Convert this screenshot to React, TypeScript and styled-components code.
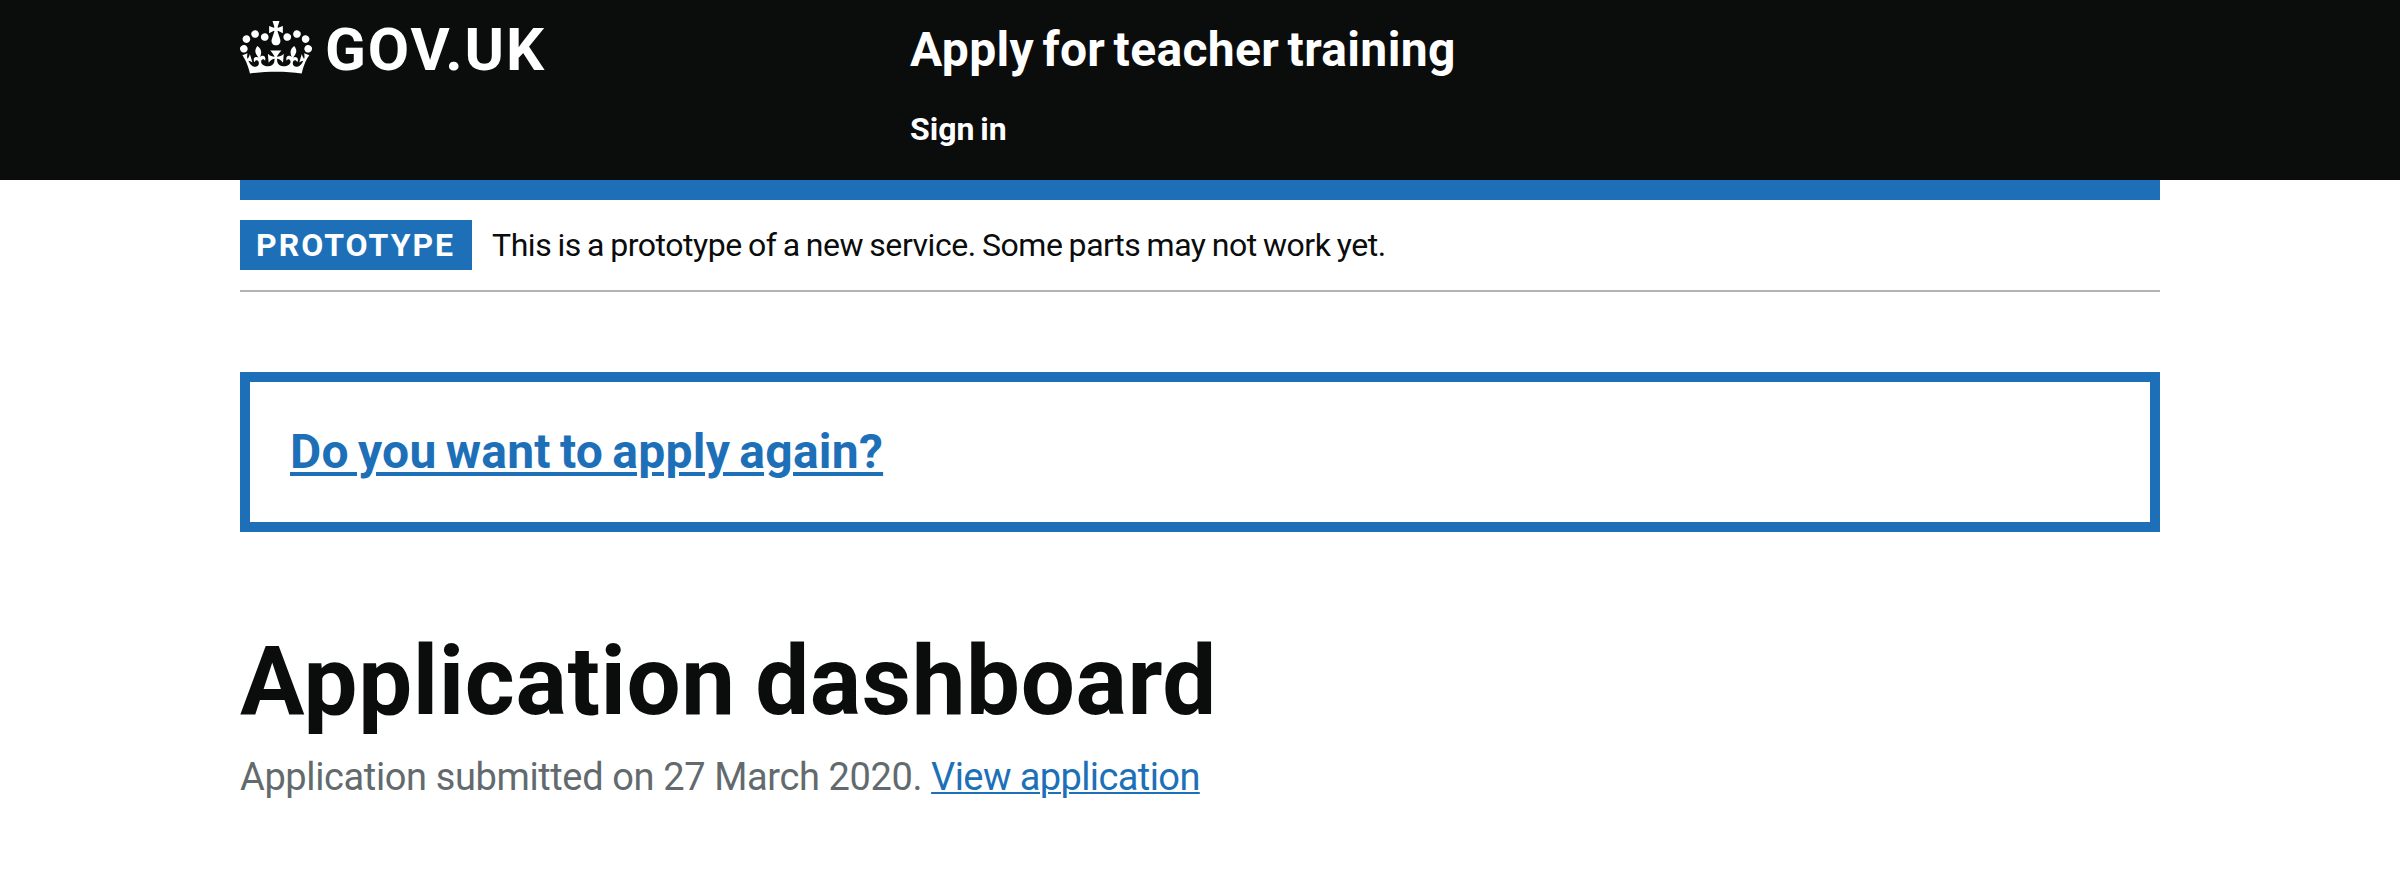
import React from 'react';
import styled, { createGlobalStyle } from 'styled-components';

const color = {
  black: '#0b0c0c',
  blue: '#1d70b8',
  border: '#b1b4b6',
  secondary: '#626a6e',
  white: '#ffffff',
};

const GlobalStyle = createGlobalStyle`
  *, *::before, *::after { box-sizing: border-box; }
  body {
    margin: 0;
    background: ${color.white};
    color: ${color.black};
    font-family: Roboto, "Liberation Sans", sans-serif;
  }
`;

const Container = styled.div`
  width: 1920px;
  margin: 0 auto;
`;

const Header = styled.header`
  height: 180px;
  background: ${color.black};
  color: ${color.white};
`;

const HeaderRow = styled(Container)`
  display: grid;
  grid-template-columns: 670px 1fr;
  align-items: start;
`;

const LogoLink = styled.a`
  display: flex;
  align-items: flex-start;
  gap: 13px;
  padding-top: 21px;
  color: inherit;
  text-decoration: none;
`;

const Crown = styled.svg`
  display: block;
  width: 72px;
  height: 53px;
  fill: currentColor;
`;

const LogoText = styled.span`
  font-size: 60px;
  font-weight: 700;
  line-height: 58px;
  letter-spacing: 1.9px;
`;

const HeaderContent = styled.div`
  display: flex;
  flex-direction: column;
  align-items: flex-start;
  padding-top: 21px;
`;

const ServiceName = styled.a`
  color: inherit;
  font-size: 48px;
  font-weight: 700;
  line-height: 58px;
  letter-spacing: 0.35px;
  word-spacing: -4px;
  text-decoration: none;
`;

const NavLink = styled.a`
  margin-top: 30px;
  color: inherit;
  font-size: 32px;
  font-weight: 700;
  line-height: 40px;
  word-spacing: -2px;
  text-decoration: none;
`;

const BlueBar = styled.div`
  height: 20px;
  background: ${color.blue};
`;

const PhaseBanner = styled.div`
  display: flex;
  align-items: center;
  gap: 20px;
  padding: 20px 0;
  border-bottom: 2px solid ${color.border};
`;

const PhaseTag = styled.strong`
  width: 232px;
  height: 50px;
  padding-left: 16px;
  background: ${color.blue};
  color: ${color.white};
  font-size: 32px;
  line-height: 50px;
  letter-spacing: 2px;
`;

const PhaseText = styled.span`
  font-size: 32px;
  line-height: 50px;
  letter-spacing: -0.45px;
  word-spacing: -1.3px;
`;

const Callout = styled.section`
  height: 160px;
  margin-top: 80px;
  padding: 41px 40px 0;
  border: 10px solid ${color.blue};
`;

const CalloutHeading = styled.h2`
  margin: 0;
  font-size: 48px;
  line-height: 58px;
  letter-spacing: 0.25px;
  word-spacing: -3px;
`;

const Link = styled.a<{ $thickness: number; $offset: number }>`
  color: ${color.blue};
  text-decoration: underline;
  text-decoration-thickness: ${(p) => p.$thickness}px;
  text-underline-offset: ${(p) => p.$offset}px;
`;

const PageTitle = styled.h1`
  margin: 99px 0 0;
  font-size: 96px;
  line-height: 100px;
  letter-spacing: 0.6px;
  word-spacing: -5px;
`;

const Caption = styled.p`
  margin: 21px 0 0;
  color: ${color.secondary};
  font-size: 38px;
  line-height: 50px;
  letter-spacing: -0.38px;

  ${Link} {
    letter-spacing: -0.6px;
  }
`;

export default function App() {
  return (
    <>
      <GlobalStyle />
      <Header>
        <HeaderRow>
          <LogoLink>
            <Crown viewBox="0 0 132 97" aria-hidden="true">
              <path
                fillRule="evenodd"
                d="M25 30.2c3.5 1.5 7.7-.2 9.1-3.7 1.5-3.6-.2-7.8-3.9-9.2-3.6-1.4-7.6.3-9.1 3.9-1.4 3.5.3 7.5 3.9 9zM9 39.5c3.6 1.5 7.8-.2 9.2-3.7 1.5-3.6-.2-7.8-3.9-9.1-3.6-1.5-7.6.2-9.1 3.8-1.4 3.5.3 7.5 3.8 9zM4.4 57.2c3.5 1.5 7.7-.2 9.1-3.8 1.5-3.6-.2-7.7-3.9-9.1-3.5-1.5-7.6.3-9.1 3.8-1.4 3.5.3 7.6 3.9 9.1zm38.3-21.4c3.5 1.5 7.7-.2 9.1-3.8 1.5-3.6-.2-7.7-3.9-9.1-3.6-1.5-7.6.3-9.1 3.8-1.3 3.6.4 7.7 3.9 9.1zm64.4-5.6c-3.6 1.5-7.8-.2-9.1-3.7-1.5-3.6.2-7.8 3.8-9.2 3.6-1.4 7.7.3 9.2 3.9 1.3 3.5-.4 7.5-3.9 9zm15.9 9.3c-3.6 1.5-7.7-.2-9.1-3.7-1.5-3.6.2-7.8 3.7-9.1 3.6-1.5 7.7.2 9.2 3.8 1.5 3.5-.3 7.5-3.8 9zm4.7 17.7c-3.6 1.5-7.8-.2-9.2-3.8-1.5-3.6.2-7.7 3.9-9.1 3.6-1.5 7.7.3 9.2 3.8 1.3 3.5-.4 7.6-3.9 9.1zM89.3 35.8c-3.6 1.5-7.8-.2-9.2-3.8-1.4-3.6.2-7.7 3.9-9.1 3.6-1.5 7.7.3 9.2 3.8 1.4 3.6-.3 7.7-3.9 9.1zM69.7 17.7l8.9 4.7V9.3l-8.9 2.8c-.2-.3-.5-.6-.9-.9L72.4 0H59.6l3.5 11.2c-.3.3-.6.5-.9.9l-8.8-2.8v13.1l8.8-4.7c.3.3.6.7.9.9l-5 15.4v.1c-.2.8-.4 1.6-.4 2.4 0 4.1 3.1 7.5 7 8.1h.2c.3 0 .7.1 1 .1.4 0 .7 0 1-.1h.2c4-.6 7.1-4.1 7.1-8.1 0-.8-.1-1.7-.4-2.4V34l-5.1-15.4c.4-.2.7-.6 1-.9zM66 92.8c16.9 0 32.8 1.1 47.1 3.2 4-16.9 8.9-26.7 14-33.5l-9.6-3.4c1 4.9 1.1 7.2 0 10.2-1.5-1.4-3-4.3-4.2-8.7L108.6 76c2.8-2 5-3.2 7.5-3.3-4.4 9.4-10 11.9-13.6 11.2-4.3-.8-6.3-4.6-5.6-7.9 1-4.7 5.7-5.9 8-.5 4.3-8.7-3-11.4-7.6-8.8 7.1-7.2 7.9-13.5 2.1-21.1-8 6.1-8.1 12.3-4.5 20.8-4.7-5.4-12.1-2.5-9.5 6.2 3.4-5.2 7.9-2 7.2 3.1-.6 4.3-6.4 7.8-13.5 7.2-10.3-.9-10.9-8-11.2-13.8 2.5-.5 7.1 1.8 11 7.3L80.2 60c-4.1 4.4-8 5.3-12.3 5.4 1.4-4.4 8-11.6 8-11.6H55.5s6.4 7.2 7.9 11.6c-4.2-.1-8-1-12.3-5.4l1.4 16.4c3.9-5.5 8.5-7.7 10.9-7.3-.3 5.8-.9 12.8-11.1 13.8-7.2.6-12.9-2.9-13.5-7.2-.7-5 3.8-8.3 7.1-3.1 2.7-8.7-4.6-11.6-9.4-6.2 3.7-8.5 3.6-14.7-4.6-20.8-5.8 7.6-5 13.9 2.2 21.1-4.7-2.6-11.9.1-7.7 8.8 2.3-5.5 7.1-4.2 8.1.5.7 3.3-1.3 7.1-5.7 7.9-3.5.7-9-1.8-13.5-11.2 2.5.1 4.7 1.3 7.5 3.3l-4.7-15.4c-1.2 4.4-2.7 7.2-4.3 8.7-1.1-3-.9-5.3 0-10.2l-9.5 3.4c5 6.9 9.9 16.7 14 33.5 14.8-2.1 30.8-3.2 47.7-3.2z"
              />
            </Crown>
            <LogoText>GOV.UK</LogoText>
          </LogoLink>
          <HeaderContent>
            <ServiceName>Apply for teacher training</ServiceName>
            <NavLink>Sign in</NavLink>
          </HeaderContent>
        </HeaderRow>
      </Header>
      <Container>
        <BlueBar />
        <PhaseBanner>
          <PhaseTag>PROTOTYPE</PhaseTag>
          <PhaseText>This is a prototype of a new service. Some parts may not work yet.</PhaseText>
        </PhaseBanner>
        <main>
          <Callout>
            <CalloutHeading>
              <Link $thickness={4} $offset={4}>Do you want to apply again?</Link>
            </CalloutHeading>
          </Callout>
          <PageTitle>Application dashboard</PageTitle>
          <Caption>
            Application submitted on 27 March 2020.{' '}
            <Link $thickness={2} $offset={2}>View application</Link>
          </Caption>
        </main>
      </Container>
    </>
  );
}
